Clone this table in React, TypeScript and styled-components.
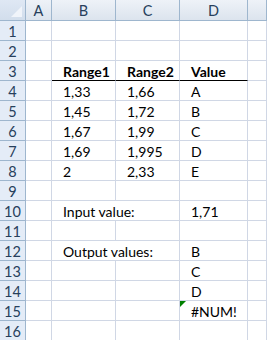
import React from "react";
import styled, { createGlobalStyle } from "styled-components";

const Global = createGlobalStyle`
  html, body { margin: 0; padding: 0; background: #fff; overflow: hidden; }
  * { box-sizing: border-box; }
`;

const Sheet = styled.div`
  display: grid;
  grid-template-columns: 26px 26px 64px 64px 68px 1fr;
  grid-template-rows: 21px;
  grid-auto-rows: 20px;
  width: 267px;
  height: 340px;
  overflow: hidden;
  font-family: Lato, "Liberation Sans", sans-serif;
  font-size: 14px;
`;

const Corner = styled.div`
  position: relative;
  background: linear-gradient(#dfe8f4, #d2deec);
  border-right: 1px solid #9eb6ce;
  border-bottom: 1px solid #9eb6ce;
  &::after {
    content: "";
    position: absolute;
    right: 3px;
    bottom: 3px;
    width: 0;
    height: 0;
    border-left: 11px solid transparent;
    border-bottom: 11px solid #f0f4fa;
  }
`;

const ColHeader = styled.div`
  display: flex;
  align-items: center;
  justify-content: center;
  background: linear-gradient(#eef2f8, #dce4ee);
  border-right: 1px solid #9eb6ce;
  border-bottom: 1px solid #9eb6ce;
  color: #27405c;
  font-size: 14.5px;
  padding-top: 1px;
`;

const RowHeader = styled.div`
  display: flex;
  align-items: center;
  justify-content: center;
  background: #e4ecf7;
  border-right: 1px solid #9eb6ce;
  border-bottom: 1px solid #9eb6ce;
  color: #27405c;
  font-size: 14.5px;
  padding-top: 1px;
`;

const Cell = styled.div<{ $bold?: boolean; $under?: boolean; $span?: number }>`
  position: relative;
  display: flex;
  align-items: center;
  padding-left: 11px;
  padding-top: 2px;
  white-space: nowrap;
  color: #000;
  font-weight: ${(p) => (p.$bold ? 700 : 400)};
  border-right: 1px solid #d0d7e5;
  border-bottom: 1px solid ${(p) => (p.$under ? "#000" : "#d0d7e5")};
  grid-column: ${(p) => (p.$span ? `span ${p.$span}` : "auto")};
`;

const ErrorMark = styled.span`
  position: absolute;
  left: 0;
  top: 0;
  width: 0;
  height: 0;
  border-top: 6px solid #008000;
  border-right: 6px solid transparent;
`;

type CellDef = { t?: string; bold?: boolean; under?: boolean; span?: number; err?: boolean };

const rows: CellDef[][] = [
  [{}, {}, {}, {}, {}],
  [{}, {}, {}, {}, {}],
  [{}, { t: "Range1", bold: true, under: true }, { t: "Range2", bold: true, under: true }, { t: "Value", bold: true, under: true }, {}],
  [{}, { t: "1,33" }, { t: "1,66" }, { t: "A" }, {}],
  [{}, { t: "1,45" }, { t: "1,72" }, { t: "B" }, {}],
  [{}, { t: "1,67" }, { t: "1,99" }, { t: "C" }, {}],
  [{}, { t: "1,69" }, { t: "1,995" }, { t: "D" }, {}],
  [{}, { t: "2" }, { t: "2,33" }, { t: "E" }, {}],
  [{}, {}, {}, {}, {}],
  [{}, { t: "Input value:", span: 2 }, { t: "1,71" }, {}],
  [{}, {}, {}, {}, {}],
  [{}, { t: "Output values:", span: 2 }, { t: "B" }, {}],
  [{}, {}, {}, { t: "C" }, {}],
  [{}, {}, {}, { t: "D" }, {}],
  [{}, {}, {}, { t: "#NUM!", err: true }, {}],
  [{}, {}, {}, {}, {}],
];

export default function App() {
  return (
    <>
      <Global />
      <Sheet>
        <Corner />
        {["A", "B", "C", "D", ""].map((c, i) => (
          <ColHeader key={i}>{c}</ColHeader>
        ))}
        {rows.map((r, ri) => (
          <React.Fragment key={ri}>
            <RowHeader>{ri + 1}</RowHeader>
            {r.map((c, ci) => (
              <Cell key={ci} $bold={c.bold} $under={c.under} $span={c.span}>
                {c.err && <ErrorMark />}
                {c.t}
              </Cell>
            ))}
          </React.Fragment>
        ))}
      </Sheet>
    </>
  );
}
